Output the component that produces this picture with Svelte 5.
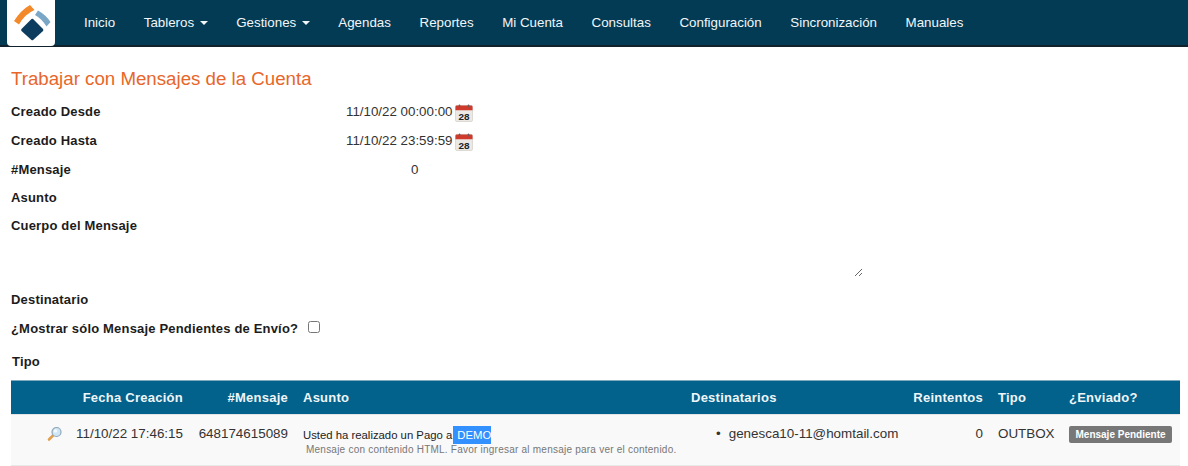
<script>
  const links = [
    { label: 'Inicio' },
    { label: 'Tableros', caret: true },
    { label: 'Gestiones', caret: true },
    { label: 'Agendas' },
    { label: 'Reportes' },
    { label: 'Mi Cuenta' },
    { label: 'Consultas' },
    { label: 'Configuración' },
    { label: 'Sincronización' },
    { label: 'Manuales' }
  ];
</script>

{#snippet calendar()}
  <svg class="cal" viewBox="0 0 19 19" width="18" height="18" aria-hidden="true">
    <rect x="0.500" y="1.500" width="18" height="17" rx="1.500" fill="#ece9e4" stroke="#c8c4bd" stroke-width="0.600"/>
    <path d="M0.500 3a1.500 1.500 0 0 1 1.500-1.500h15A1.500 1.500 0 0 1 18.500 3v3.500h-18z" fill="#cf3a2c"/>
    <rect x="4" y="0.500" width="1.500" height="3" rx="0.700" fill="#6b5a55"/>
    <rect x="13.500" y="0.500" width="1.500" height="3" rx="0.700" fill="#6b5a55"/>
    <text x="9.500" y="16.500" text-anchor="middle" class="calnum">28</text>
  </svg>
{/snippet}

<nav class="nav">
  <a class="brand" href="#top" aria-label="Inicio">
    <svg viewBox="0 0 48 46" width="48" height="46" aria-hidden="true">
      <path d="M7 21 Q14 10 23 5 L27.500 10 Q18 14 12 24.500 Z" fill="#f28a2c"/>
      <path d="M31 10.500 Q39 15 43.500 22 L39.500 26.500 Q35 19 28 15 Z" fill="#7ba7c6"/>
      <path d="M24.500 19 Q25.300 18.300 26.100 19 L36 29 Q36.700 30 36 31 L26.100 40 Q25.300 40.700 24.500 40 L14.500 31 Q13.700 30 14.500 29 Z" fill="#0d3d5e"/>
    </svg>
  </a>
  <ul class="menu">
    {#each links as link}
      <li>
        <a href="#top">{link.label}{#if link.caret}<span class="caret"></span>{/if}</a>
      </li>
    {/each}
  </ul>
</nav>

<main class="page">
  <h1>Trabajar con Mensajes de la Cuenta</h1>

  <form class="form">
    <div class="row r1">
      <label for="desde">Creado Desde</label>
      <div class="value"><span id="desde">11/10/22 00:00:00</span>{@render calendar()}</div>
    </div>
    <div class="row r2">
      <label for="hasta">Creado Hasta</label>
      <div class="value"><span id="hasta">11/10/22 23:59:59</span>{@render calendar()}</div>
    </div>
    <div class="row r3">
      <label for="num">#Mensaje</label>
      <div class="value"><span id="num" class="zero">0</span></div>
    </div>
    <div class="row r4"><label for="asunto">Asunto</label></div>
    <div class="row r5"><label for="cuerpo">Cuerpo del Mensaje</label></div>
    <div class="body-field"><textarea id="cuerpo"></textarea></div>
    <div class="row r6"><label for="dest">Destinatario</label></div>
    <div class="row r7">
      <label for="pend">¿Mostrar sólo Mensaje Pendientes de Envío?</label>
      <input id="pend" type="checkbox" />
    </div>
    <div class="row r8"><label for="tipo">Tipo</label></div>
  </form>

  <table>
    <colgroup>
      <col class="c0" /><col class="c1" /><col class="c2" /><col class="c3" />
      <col class="c4" /><col class="c5" /><col class="c6" /><col />
    </colgroup>
    <thead>
      <tr>
        <th></th>
        <th class="num">Fecha Creación</th>
        <th class="num">#Mensaje</th>
        <th>Asunto</th>
        <th>Destinatarios</th>
        <th class="num">Reintentos</th>
        <th>Tipo</th>
        <th>¿Enviado?</th>
      </tr>
    </thead>
    <tbody>
      <tr>
        <td class="lens">
          <svg viewBox="0 0 16 16" width="16" height="16" aria-hidden="true">
            <path d="M6 9.500 L2 13.500" stroke="#e0a050" stroke-width="2.600" stroke-linecap="round"/>
            <circle cx="9.500" cy="6" r="4.500" fill="#cfe6f5" stroke="#8fa6b8" stroke-width="1.200"/>
            <circle cx="8.500" cy="5" r="1.800" fill="#f2fafe"/>
          </svg>
        </td>
        <td class="num">11/10/22 17:46:15</td>
        <td class="num">648174615089</td>
        <td class="subject">
          <div class="subj">Usted ha realizado un Pago a<mark>DEMO</mark></div>
          <div class="hint">Mensaje con contenido HTML. Favor ingresar al mensaje para ver el contenido.</div>
        </td>
        <td><ul class="dest"><li>genesca10-11@homtail.com</li></ul></td>
        <td class="num">0</td>
        <td>OUTBOX</td>
        <td><span class="badge">Mensaje Pendiente</span></td>
      </tr>
    </tbody>
  </table>
</main>

<style>
  :global(body) {
    margin: 0;
    background: #fff;
    font-family: "Liberation Sans", Arial, sans-serif;
    color: #222;
    overflow: hidden;
  }

  .nav {
    display: flex;
    height: 45px;
    background: #033b55;
    border-bottom: 2px solid #12222c;
    padding-left: 7px;
  }
  .brand {
    display: block;
    width: 48px;
    height: 46px;
    background: #fff;
    border-radius: 0 0 4px 4px;
    flex: none;
  }
  .brand svg { display: block; }
  .menu {
    display: flex;
    list-style: none;
    margin: 0 0 0 29px;
    padding: 0;
    gap: 28.600px;
    align-items: center;
  }
  .menu a {
    color: #f2f6f8;
    text-decoration: none;
    font-size: 13.330px;
    display: flex;
    align-items: center;
  }
  .caret {
    display: inline-block;
    margin-left: 5.500px;
    border-top: 4px solid #f2f6f8;
    border-left: 4px solid transparent;
    border-right: 4px solid transparent;
  }

  .page { padding: 0 8px 0 11px; }
  h1 {
    margin: 21px 0 0;
    font-size: 18.700px;
    line-height: 22px;
    font-weight: 400;
    color: #e8662a;
  }

  .form { margin-top: 7px; }
  .row { display: flex; align-items: center; height: 28px; }
  label { font-size: 13px; font-weight: 700; color: #1c1c1c; letter-spacing: 0.18px; }
  .row > label { width: 335px; flex: none; }
  .value { display: flex; align-items: center; font-size: 13.330px; color: #333; }
  .cal { margin-left: 3px; margin-top: 2px; }
  .calnum { font: 700 10.500px "Liberation Sans", Arial, sans-serif; fill: #222; }
  .zero { margin-left: 65px; }
  .r1 { height: 29px; }
  .r2 { height: 29px; }
  .body-field { height: 46px; padding-left: 335px; }
  textarea {
    display: block;
    width: 517px;
    height: 38px;
    margin: 0;
    padding: 0;
    border: none;
    outline: none;
    background: transparent;
    resize: both;
  }
  .r7 > label { width: auto; }
  .r7 { margin-top: 1px; }
  input[type="checkbox"] {
    width: 12px;
    height: 12px;
    margin: -3px 0 0 10px;
  }
  .r8 { height: 38px; padding-left: 1px; }

  table {
    width: 1169px;
    border-collapse: collapse;
    table-layout: fixed;
    font-size: 13.400px;
    color: #333;
  }
  .c0 { width: 57px; }
  .c1 { width: 123px; }
  .c2 { width: 105px; }
  .c3 { width: 388px; }
  .c4 { width: 215px; }
  .c5 { width: 92px; }
  .c6 { width: 71px; }
  thead tr {
    background: #02628b;
    border-top: 1px solid #7fa9bd;
    height: 34px;
  }
  th {
    color: #f0f5f8;
    font-size: 13px;
    font-weight: 700;
    letter-spacing: 0.25px;
    text-align: left;
    padding: 0 8px 0 7px;
    white-space: nowrap;
  }
  th.num, td.num { text-align: right; }
  tbody tr {
    background: #f9f9f9;
    border-top: 1px solid #e4e4e4;
    border-bottom: 1px solid #e8e8e8;
    height: 51px;
  }
  td {
    padding: 11px 8px 0 7px;
    vertical-align: top;
    white-space: nowrap;
    line-height: 16px;
  }
  td.lens { padding: 11px 5px 0 0; }
  .lens svg { display: block; margin-left: auto; }
  .subj { font-size: 11.330px; color: #222; height: 18px; line-height: 18px; }
  mark { display: inline-block; background: #3390ff; color: #fff; padding-left: 4px; margin-left: 1px; line-height: 18px; height: 18px; }
  .hint { font-size: 10px; line-height: 13px; color: #777; margin-left: 3px; letter-spacing: 0.23px; margin-top: -1px; }
  .dest { margin: 0; padding: 0 0 0 25px; list-style: none; }
  .dest li::before { content: "•"; margin-right: 8px; }
  .badge {
    display: inline-block;
    background: #777;
    color: #fff;
    font-size: 10px;
    font-weight: 700;
    line-height: 17px;
    padding: 0 6.500px;
    border-radius: 2px;
  }
</style>
